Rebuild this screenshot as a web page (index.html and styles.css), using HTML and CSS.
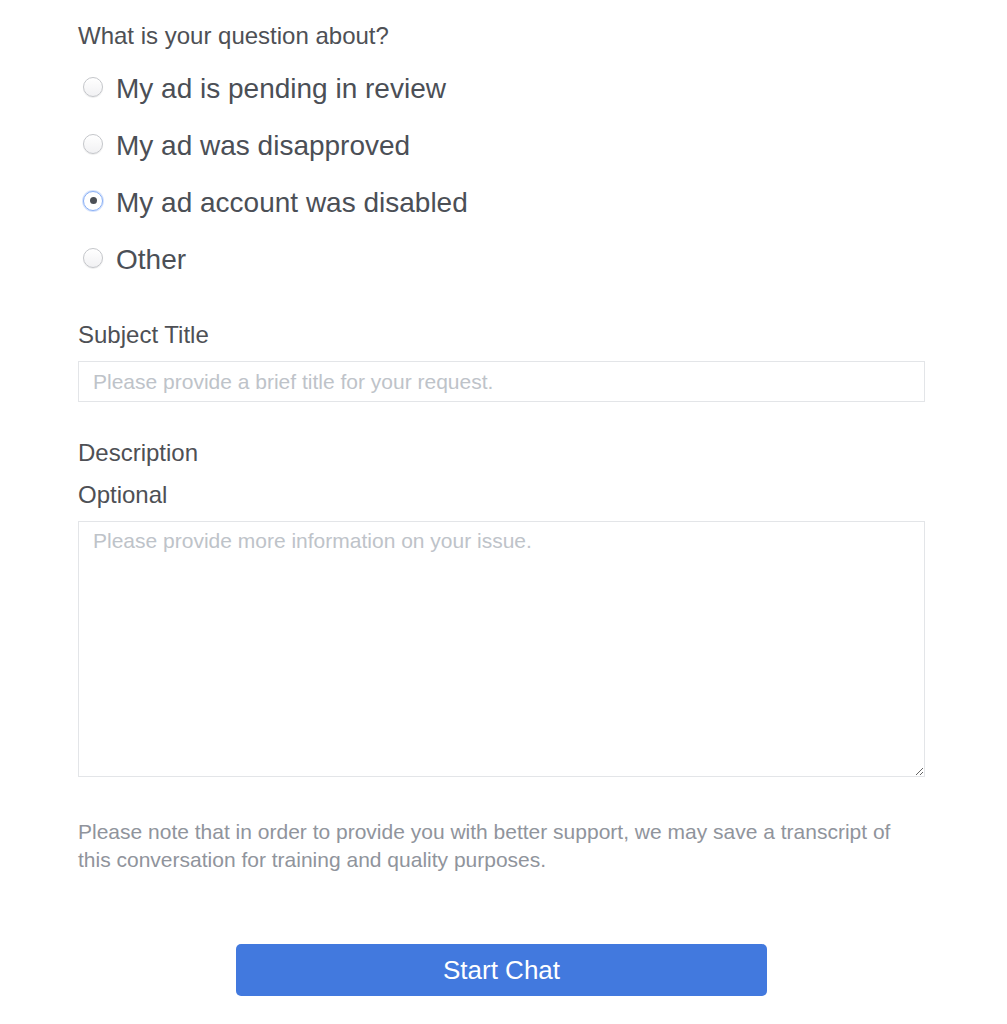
FILE: index.html
```html
<!DOCTYPE html>
<html lang="en">
<head>
<meta charset="utf-8">
<title>Support</title>
<link rel="stylesheet" href="styles.css">
</head>
<body>
<form class="form">
  <div class="heading">What is your question about?</div>
  <div class="options">
    <label class="option"><input type="radio" name="q" class="radio"><span>My ad is pending in review</span></label>
    <label class="option"><input type="radio" name="q" class="radio"><span>My ad was disapproved</span></label>
    <label class="option"><input type="radio" name="q" class="radio" checked><span>My ad account was disabled</span></label>
    <label class="option"><input type="radio" name="q" class="radio"><span>Other</span></label>
  </div>
  <div class="label subject-label">Subject Title</div>
  <input class="text-input" type="text" placeholder="Please provide a brief title for your request.">
  <div class="label desc-label">Description</div>
  <div class="label opt-label">Optional</div>
  <textarea class="text-area" placeholder="Please provide more information on your issue."></textarea>
  <p class="note">Please note that in order to provide you with better support, we may save a transcript of this conversation for training and quality purposes.</p>
  <div class="actions">
    <button type="button" class="start-btn">Start Chat</button>
  </div>
</form>
</body>
</html>
```

FILE: styles.css
```css
html, body {
  margin: 0;
  padding: 0;
  background: #ffffff;
}
body {
  font-family: "Liberation Sans", Arial, Helvetica, sans-serif;
  color: #4b4f56;
}
.form {
  width: 847px;
  margin-left: 78px;
  padding-top: 21px;
  display: flex;
  flex-direction: column;
}
.heading {
  font-size: 24px;
  line-height: 30px;
  color: #4e5055;
}
.options {
  margin-top: 9px;
  display: flex;
  flex-direction: column;
}
.option {
  height: 57px;
  display: flex;
  align-items: center;
  font-size: 28px;
  color: #4b4f56;
  cursor: pointer;
}
.radio {
  -webkit-appearance: none;
  appearance: none;
  width: 20px;
  height: 20px;
  margin: -4px 13px 0 5px;
  border-radius: 50%;
  border: 1px solid #c4c6ca;
  background: linear-gradient(#ffffff, #f1f1f3);
  box-shadow: inset 0 1px 1px rgba(255,255,255,0.9), 0 1px 1px rgba(0,0,0,0.08);
  display: grid;
  place-items: center;
  flex: none;
}
.radio:checked {
  border-color: #8ab0f5;
  background: #ffffff;
  box-shadow: 0 0 0 1px rgba(138,176,245,0.35);
}
.radio:checked::before {
  content: "";
  width: 7px;
  height: 7px;
  border-radius: 50%;
  background: #4b4f56;
}
.label {
  font-size: 24px;
  color: #4e5055;
}
.subject-label {
  margin-top: 32px;
  line-height: 30px;
}
.text-input {
  margin-top: 11px;
  box-sizing: border-box;
  width: 100%;
  height: 41px;
  border: 1px solid #e3e5e8;
  padding: 0 14px;
  font-family: inherit;
  font-size: 21px;
  color: #4b4f56;
  outline: none;
}
.text-input::placeholder,
.text-area::placeholder {
  color: #bec3c9;
}
.desc-label {
  margin-top: 30px;
  line-height: 42px;
}
.opt-label {
  line-height: 42px;
}
.text-area {
  margin-top: 5px;
  box-sizing: border-box;
  width: 100%;
  height: 256px;
  border: 1px solid #e3e5e8;
  padding: 6px 14px;
  font-family: inherit;
  font-size: 21px;
  line-height: 26px;
  color: #4b4f56;
  outline: none;
  resize: both;
  display: block;
}
.note {
  margin: 41px 0 0;
  max-width: 822px;
  font-size: 21px;
  line-height: 28px;
  color: #90949c;
}
.actions {
  margin-top: 70px;
  display: flex;
  justify-content: center;
}
.start-btn {
  width: 531px;
  height: 52px;
  border: none;
  border-radius: 5px;
  background: #4279de;
  color: #ffffff;
  font-family: inherit;
  font-size: 26px;
  cursor: pointer;
}
```
